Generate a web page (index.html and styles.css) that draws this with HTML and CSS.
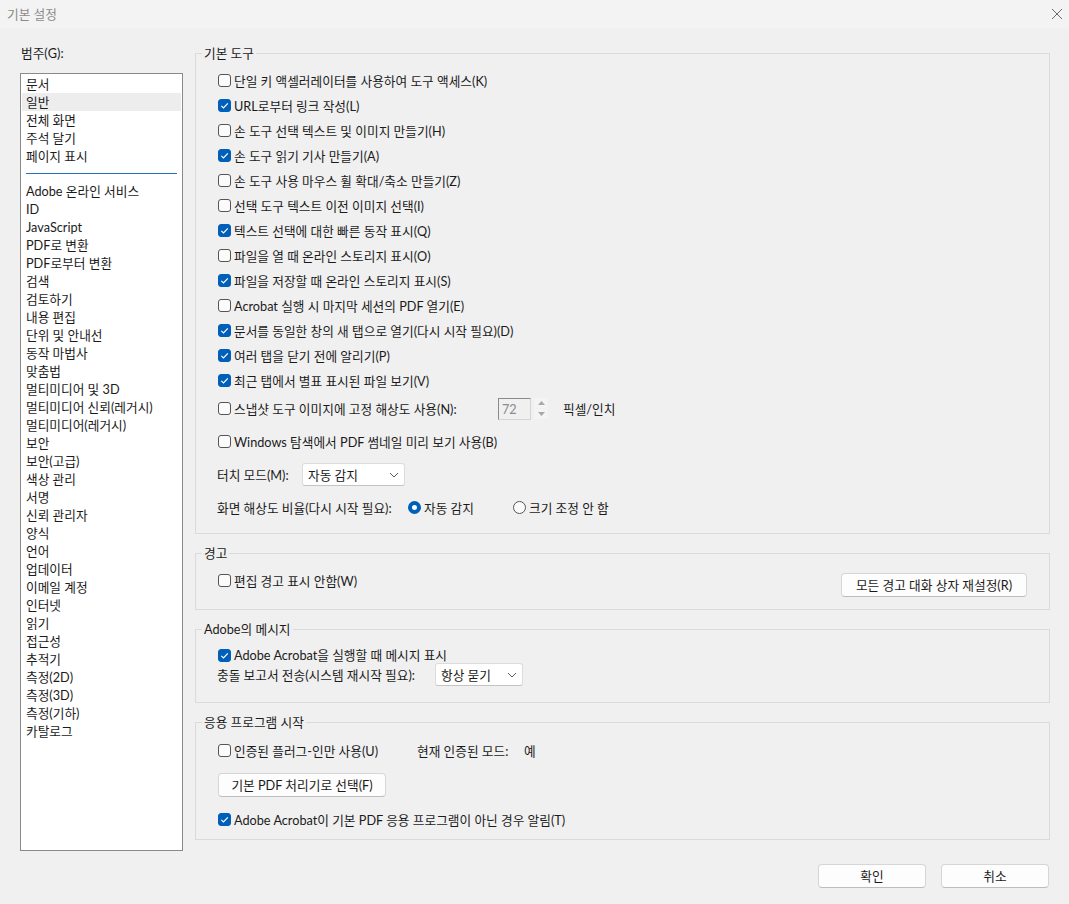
FILE: index.html
```html
<!DOCTYPE html>
<html lang="ko">
<head>
<meta charset="utf-8">
<title>기본 설정</title>
<link rel="stylesheet" href="styles.css">
</head>
<body>
<div class="titlebar">
  <span class="title">기본 설정</span>
  <svg class="close" width="12" height="12" viewBox="0 0 12 12"><path d="M1 1 L11 11 M11 1 L1 11" stroke="#6a6a6a" stroke-width="1" fill="none"/></svg>
</div>
<div class="main">
  <div class="left">
    <div class="cat-label">범주(G):</div>
    <div class="list">
      <div class="item">문서</div>
      <div class="item sel">일반</div>
      <div class="item">전체 화면</div>
      <div class="item">주석 달기</div>
      <div class="item">페이지 표시</div>
      <div class="sep"></div>
      <div class="item">Adobe 온라인 서비스</div>
      <div class="item">ID</div>
      <div class="item">JavaScript</div>
      <div class="item">PDF로 변환</div>
      <div class="item">PDF로부터 변환</div>
      <div class="item">검색</div>
      <div class="item">검토하기</div>
      <div class="item">내용 편집</div>
      <div class="item">단위 및 안내선</div>
      <div class="item">동작 마법사</div>
      <div class="item">맞춤법</div>
      <div class="item">멀티미디어 및 3D</div>
      <div class="item">멀티미디어 신뢰(레거시)</div>
      <div class="item">멀티미디어(레거시)</div>
      <div class="item">보안</div>
      <div class="item">보안(고급)</div>
      <div class="item">색상 관리</div>
      <div class="item">서명</div>
      <div class="item">신뢰 관리자</div>
      <div class="item">양식</div>
      <div class="item">언어</div>
      <div class="item">업데이터</div>
      <div class="item">이메일 계정</div>
      <div class="item">인터넷</div>
      <div class="item">읽기</div>
      <div class="item">접근성</div>
      <div class="item">추적기</div>
      <div class="item">측정(2D)</div>
      <div class="item">측정(3D)</div>
      <div class="item">측정(기하)</div>
      <div class="item">카탈로그</div>
    </div>
  </div>
  <div class="right">
    <fieldset class="group g1">
      <legend>기본 도구</legend>
      <div class="chk"><span class="box"></span><span>단일 키 액셀러레이터를 사용하여 도구 액세스(K)</span></div>
      <div class="chk"><span class="box on"><svg viewBox="0 0 13 13"><path d="M3.3 6.9 L5.5 9 L9.8 4.3"/></svg></span><span>URL로부터 링크 작성(L)</span></div>
      <div class="chk"><span class="box"></span><span>손 도구 선택 텍스트 및 이미지 만들기(H)</span></div>
      <div class="chk"><span class="box on"><svg viewBox="0 0 13 13"><path d="M3.3 6.9 L5.5 9 L9.8 4.3"/></svg></span><span>손 도구 읽기 기사 만들기(A)</span></div>
      <div class="chk"><span class="box"></span><span>손 도구 사용 마우스 휠 확대/축소 만들기(Z)</span></div>
      <div class="chk"><span class="box"></span><span>선택 도구 텍스트 이전 이미지 선택(I)</span></div>
      <div class="chk"><span class="box on"><svg viewBox="0 0 13 13"><path d="M3.3 6.9 L5.5 9 L9.8 4.3"/></svg></span><span>텍스트 선택에 대한 빠른 동작 표시(Q)</span></div>
      <div class="chk"><span class="box"></span><span>파일을 열 때 온라인 스토리지 표시(O)</span></div>
      <div class="chk"><span class="box on"><svg viewBox="0 0 13 13"><path d="M3.3 6.9 L5.5 9 L9.8 4.3"/></svg></span><span>파일을 저장할 때 온라인 스토리지 표시(S)</span></div>
      <div class="chk"><span class="box"></span><span>Acrobat 실행 시 마지막 세션의 PDF 열기(E)</span></div>
      <div class="chk"><span class="box on"><svg viewBox="0 0 13 13"><path d="M3.3 6.9 L5.5 9 L9.8 4.3"/></svg></span><span>문서를 동일한 창의 새 탭으로 열기(다시 시작 필요)(D)</span></div>
      <div class="chk"><span class="box on"><svg viewBox="0 0 13 13"><path d="M3.3 6.9 L5.5 9 L9.8 4.3"/></svg></span><span>여러 탭을 닫기 전에 알리기(P)</span></div>
      <div class="chk"><span class="box on"><svg viewBox="0 0 13 13"><path d="M3.3 6.9 L5.5 9 L9.8 4.3"/></svg></span><span>최근 탭에서 별표 표시된 파일 보기(V)</span></div>
      <div class="row snap">
        <div class="chk w-snap"><span class="box"></span><span>스냅샷 도구 이미지에 고정 해상도 사용(N):</span></div>
        <div class="numbox">72</div>
        <div class="spin">
          <span class="spin-btn"><svg width="7" height="4" viewBox="0 0 7 4"><path d="M0 4 L3.5 0 L7 4Z" fill="#a8a8a8"/></svg></span>
          <span class="spin-btn"><svg width="7" height="4" viewBox="0 0 7 4"><path d="M0 0 L3.5 4 L7 0Z" fill="#a8a8a8"/></svg></span>
        </div>
        <span class="unit">픽셀/인치</span>
      </div>
      <div class="chk gap8"><span class="box"></span><span>Windows 탐색에서 PDF 썸네일 미리 보기 사용(B)</span></div>
      <div class="row gap8">
        <span class="lbl w-touch">터치 모드(M):</span>
        <div class="select s-touch"><span>자동 감지</span><svg width="10" height="6" viewBox="0 0 10 6"><path d="M1 1 L5 5 L9 1" stroke="#5a5a5a" fill="none" stroke-width="1"/></svg></div>
      </div>
      <div class="row gap8">
        <span class="lbl w-ratio">화면 해상도 비율(다시 시작 필요):</span>
        <span class="radio-item w-radio"><span class="radio on"></span><span>자동 감지</span></span>
        <span class="radio-item"><span class="radio"></span><span>크기 조정 안 함</span></span>
      </div>
    </fieldset>

    <fieldset class="group g2">
      <legend>경고</legend>
      <div class="warn-row">
        <div class="chk"><span class="box"></span><span>편집 경고 표시 안함(W)</span></div>
        <button class="btn btn-reset">모든 경고 대화 상자 재설정(R)</button>
      </div>
    </fieldset>

    <fieldset class="group g3">
      <legend>Adobe의 메시지</legend>
      <div class="chk short"><span class="box on"><svg viewBox="0 0 13 13"><path d="M3.3 6.9 L5.5 9 L9.8 4.3"/></svg></span><span>Adobe Acrobat을 실행할 때 메시지 표시</span></div>
      <div class="row r-crash">
        <span class="lbl w-crash">충돌 보고서 전송(시스템 재시작 필요):</span>
        <div class="select s-crash"><span>항상 묻기</span><svg width="10" height="6" viewBox="0 0 10 6"><path d="M1 1 L5 5 L9 1" stroke="#5a5a5a" fill="none" stroke-width="1"/></svg></div>
      </div>
    </fieldset>

    <fieldset class="group g4">
      <legend>응용 프로그램 시작</legend>
      <div class="row">
        <div class="chk w-plug"><span class="box"></span><span>인증된 플러그-인만 사용(U)</span></div>
        <span class="lbl w-mode">현재 인증된 모드:</span>
        <span class="lbl">예</span>
      </div>
      <button class="btn btn-pdf">기본 PDF 처리기로 선택(F)</button>
      <div class="chk last"><span class="box on"><svg viewBox="0 0 13 13"><path d="M3.3 6.9 L5.5 9 L9.8 4.3"/></svg></span><span>Adobe Acrobat이 기본 PDF 응용 프로그램이 아닌 경우 알림(T)</span></div>
    </fieldset>
  </div>
</div>
<div class="footer">
  <button class="btn btn-foot">확인</button>
  <button class="btn btn-foot">취소</button>
</div>
</body>
</html>
```

FILE: styles.css
```css
html, body {
  margin: 0;
  padding: 0;
}
body {
  width: 1069px;
  height: 904px;
  overflow: hidden;
  background: #f0f0f0;
  font-family: Lato, "Noto Sans CJK KR", sans-serif;
  font-size: 12.7px;
  line-height: 16px;
  color: #1b1b1b;
}
.titlebar {
  height: 28px;
  background: #f3f3f3;
  display: flex;
  align-items: center;
  justify-content: space-between;
  padding: 0 6px 0 7px;
  box-sizing: border-box;
}
.title {
  color: #8a8a8a;
}
.main {
  display: flex;
  gap: 12px;
  padding: 17px 19px 0 20px;
}
.left {
  width: 163px;
  flex: none;
}
.cat-label {
  height: 16px;
  padding-left: 1px;
}
.list {
  margin-top: 12px;
  height: 778px;
  box-sizing: border-box;
  border: 1px solid #8a8a8a;
  background: #ffffff;
  padding: 1px;
}
.item {
  height: 18px;
  line-height: 18px;
  padding-left: 4px;
  white-space: nowrap;
}
.item.sel {
  background: #ededed;
}
.sep {
  height: 1px;
  background: #2a73b5;
  margin: 8px 4px 8px;
}
.right {
  flex: 1;
  display: flex;
  flex-direction: column;
  gap: 11px;
}
.group {
  margin: 0;
  min-width: 0;
  border: 1px solid #dadada;
  padding: 0 22px 0 22px;
}
.group legend {
  padding: 0 2px;
  margin-left: -16px;
  line-height: 16px;
  height: 16px;
}
.g1 { padding-top: 7px; padding-bottom: 13px; }
.g2 { padding-top: 7px; padding-bottom: 12px; }
.g3 { padding-top: 10px; padding-bottom: 16px; }
.g4 { padding-top: 8px; padding-bottom: 7px; }

.chk {
  display: flex;
  align-items: center;
  height: 25px;
  white-space: nowrap;
}
.chk.short { height: 16px; }
.box {
  width: 13px;
  height: 13px;
  box-sizing: border-box;
  border: 1px solid #555555;
  border-radius: 3px;
  background: #fbfbfb;
  margin-right: 3px;
  flex: none;
  display: flex;
}
.box.on {
  background: #005fb8;
  border-color: #005fb8;
}
.box svg {
  width: 13px;
  height: 13px;
  margin: -1px;
}
.box svg path {
  fill: none;
  stroke: #ffffff;
  stroke-width: 1.2;
}
.row {
  display: flex;
  align-items: center;
  height: 25px;
  white-space: nowrap;
}
.r-crash { height: 23px; }
.snap { margin-top: 3px; }
.gap8 { margin-top: 8px; }
.lbl { flex: none; }
.w-snap { width: 280px; flex: none; }
.w-touch { width: 85px; margin-left: -1px; }
.w-ratio { width: 191px; margin-left: -1px; }
.w-radio { width: 105px; }
.w-crash { width: 218px; margin-left: -1px; }
.w-plug { width: 199px; flex: none; }
.w-mode { width: 107px; }

.numbox {
  width: 33px;
  height: 22px;
  box-sizing: border-box;
  border: 1px solid #d4d4d4;
  border-top-color: #8a8a8a;
  border-left-color: #8a8a8a;
  background: #f0f0f0;
  color: #8c8c8c;
  padding-left: 3px;
  line-height: 20px;
}
.spin {
  margin-left: 3px;
  width: 14px;
  display: flex;
  flex-direction: column;
  gap: 1px;
}
.spin-btn {
  height: 10px;
  background: #f4f4f4;
  display: flex;
  align-items: center;
  justify-content: center;
}
.unit { margin-left: 15px; }

.select {
  height: 23px;
  box-sizing: border-box;
  background: #ffffff;
  border: 1px solid #dcdcdc;
  border-bottom-color: #c4c4c4;
  border-radius: 3px;
  display: flex;
  align-items: center;
  justify-content: space-between;
  padding: 0 5px 0 5px;
}
.s-touch { width: 103px; }
.s-crash { width: 88px; }

.radio-item {
  display: flex;
  align-items: center;
}
.radio {
  width: 13px;
  height: 13px;
  box-sizing: border-box;
  border-radius: 50%;
  border: 1px solid #555555;
  background: #fbfbfb;
  margin-right: 3px;
  flex: none;
}
.radio.on {
  border: 4px solid #005fb8;
  background: #ffffff;
}

.warn-row {
  display: flex;
  justify-content: space-between;
  align-items: flex-start;
}
.btn {
  font-family: inherit;
  font-size: inherit;
  color: #1b1b1b;
  background: #fdfdfd;
  border: 1px solid #d6d6d6;
  border-bottom-color: #bdbdbd;
  border-radius: 4px;
  height: 24px;
  padding: 0;
  line-height: 16px;
  box-sizing: border-box;
}
.btn-reset {
  width: 186px;
  margin-top: 5px;
}
.btn-pdf {
  display: block;
  width: 168px;
  margin-top: 10px;
}
.chk.last { margin-top: 10px; }
.footer {
  display: flex;
  justify-content: flex-end;
  gap: 15px;
  padding-right: 20px;
  margin-top: 13px;
}
.btn-foot {
  width: 108px;
}
```
